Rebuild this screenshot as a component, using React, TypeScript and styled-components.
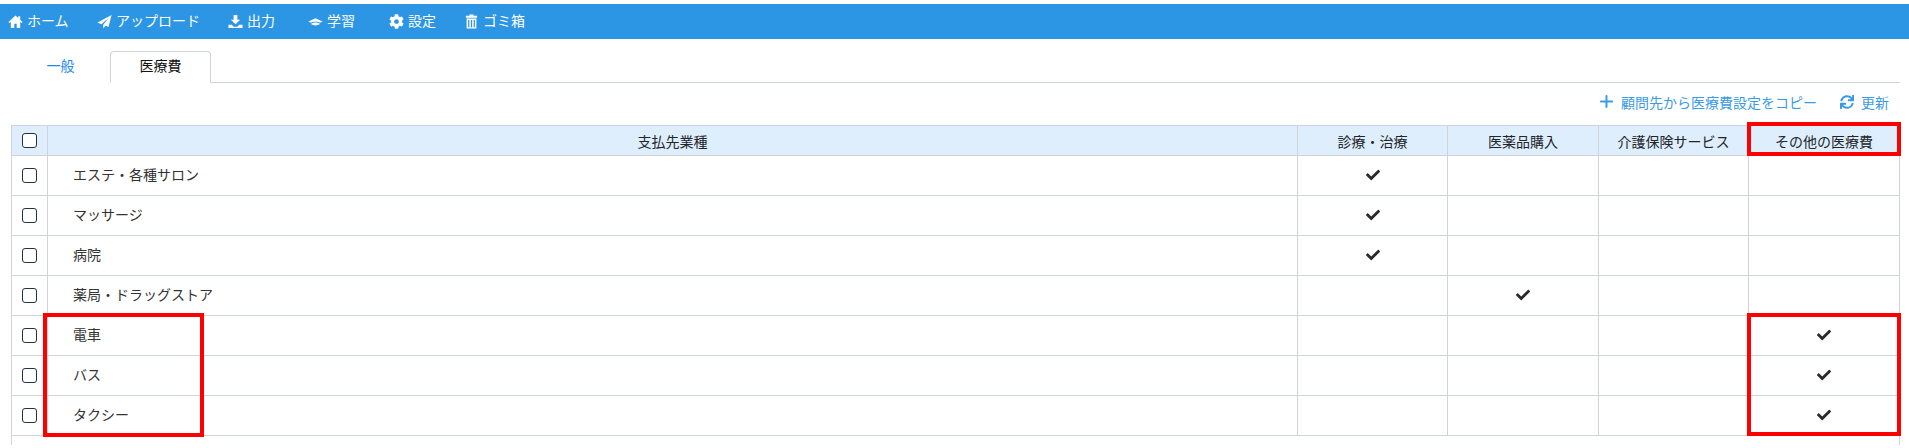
import React from 'react';
import styled, { createGlobalStyle } from 'styled-components';
import { FaCog, FaCheck, FaSync } from 'react-icons/fa';
import { FiPlus } from 'react-icons/fi';

const GlobalStyle = createGlobalStyle`
  html, body {
    margin: 0;
    background: #fff;
    font-family: "Liberation Sans", "Noto Sans CJK JP", sans-serif;
    font-size: 14px;
    color: #212529;
  }
`;

const Page = styled.div`
  padding-top: 4px;
  height: 444px;
  overflow: hidden;
`;

const NavBar = styled.nav`
  display: flex;
  align-items: center;
  height: 35px;
  padding-left: 9px;
  background: #2d96e4;
`;

const NavItem = styled.a<{ $width: number }>`
  display: flex;
  align-items: center;
  gap: 5px;
  width: ${p => p.$width}px;
  color: #fff;
  font-size: 14px;
  white-space: nowrap;
  svg { width: 15px; height: 15px; flex: none; margin-left: -1px; margin-right: -1px; }
`;

const NavLabel = styled.span`
  padding-bottom: 4px;
`;

const Content = styled.div`
  padding: 12px 9px 0 11px;
`;

const Tabs = styled.div`
  display: flex;
  height: 31px;
  border-bottom: 1px solid #ced4da;
`;

const Tab = styled.div<{ $active?: boolean; $width: number }>`
  display: flex;
  align-items: center;
  justify-content: center;
  width: ${p => p.$width}px;
  height: 32px;
  box-sizing: border-box;
  padding-bottom: 4px;
  font-size: 14px;
  color: ${p => (p.$active ? '#111' : '#1e88f0')};
  background: #fff;
  border: 1px solid ${p => (p.$active ? '#ced4da' : 'transparent')};
  border-bottom-color: ${p => (p.$active ? '#fff' : 'transparent')};
  border-radius: 4px 4px 0 0;
`;

const Toolbar = styled.div`
  display: flex;
  justify-content: flex-end;
  align-items: center;
  gap: 23px;
  height: 37px;
  padding: 0 11px 5px 0;
`;

const ToolButton = styled.a<{ $gap: number }>`
  display: flex;
  align-items: center;
  gap: ${p => p.$gap}px;
  color: #3a9be4;
  font-size: 14px;
  svg { flex: none; }
`;

const TableWrap = styled.div`
  position: relative;
  height: 320px;
  border-left: 1px solid #ced4da;
  border-right: 1px solid #ced4da;
`;

const Table = styled.table`
  width: 100%;
  table-layout: fixed;
  border-collapse: collapse;
  font-size: 14px;
`;

const HeadCell = styled.th<{ $width?: number }>`
  width: ${p => (p.$width ? `${p.$width}px` : 'auto')};
  height: 29px;
  padding: 0;
  background: #deeefd;
  border: 1px solid #ced4da;
  font-weight: 400;
  text-align: center;
  color: #212529;
  &:first-child { border-left: 0; }
  &:last-child { border-right: 0; }
`;

const Cell = styled.td`
  height: 37px;
  padding: 0 0 2px;
  border: 1px solid #ced4da;
  text-align: center;
  &:last-child { border-right: 0; }
  svg { display: block; margin: 0 auto; color: #2a2a2a; }
`;

const CheckCell = styled.td`
  height: 39px;
  padding: 0;
  border: 1px solid #ced4da;
  border-left: 0;
`;

const NameCell = styled.td`
  height: 36px;
  padding: 0 0 3px 25px;
  border: 1px solid #ced4da;
  text-align: left;
  color: #333;
`;

const Check = styled.span`
  display: block;
  width: 15px;
  height: 15px;
  margin: 0 auto;
  box-sizing: border-box;
  border: 1px solid #23323f;
  border-radius: 3px;
  background: #fff;
`;

const RedBox = styled.div<{ $left?: number; $right?: number; $top: number; $width: number; $height: number }>`
  position: absolute;
  ${p => (p.$left !== undefined ? `left: ${p.$left}px;` : '')}
  ${p => (p.$right !== undefined ? `right: ${p.$right}px;` : '')}
  top: ${p => p.$top}px;
  width: ${p => p.$width}px;
  height: ${p => p.$height}px;
  box-sizing: border-box;
  border: 4px solid #f00;
`;

const Glyph: React.FC<{ d: string }> = ({ d }) => (
  <svg viewBox="0 0 16 16" fill="currentColor" fillRule="evenodd"><path d={d} /></svg>
);

const homeIcon = 'M8 1.5 L0.5 8.5 l1 1.2 L3 8.4 V15 h3.7 v-4.5 h2.6 V15 H13 V8.4 l1.5 1.3 1-1.2 -2.5-2.3 V2.5 h-2 v1.8z';
const sendIcon = 'M15.5 1 L0.5 9 l4.3 1.8 L12.5 4 6.5 11.6 V15.5 l2.6-3 3.2 1.4z';
const saveIcon = 'M6 1h4v5h3l-5 5 -5-5h3z M0.5 11.5H4l2 2h4l2-2h3.5V15H0.5z';
const eduIcon = 'M8 4.5 L0.5 8 3 9.2 C5.5 7.8 10.5 7.8 13 9.2 L15.5 8z M3.5 10 C6 8.9 10 8.9 12.5 10 V11 C10 12.6 6 12.6 3.5 11z';
const trashIcon = 'M5.8 0.5h4.4v1.4H14v2H2v-2h3.8z M2.8 4.8h10.4V15.5H2.8z M4.4 6.4v7.6h1.3V6.4z M7.3 6.4v7.6h1.4V6.4z M10.3 6.4v7.6h1.3V6.4z';

const navItems = [
  { label: 'ホーム', icon: <Glyph d={homeIcon} />, width: 89 },
  { label: 'アップロード', icon: <Glyph d={sendIcon} />, width: 131 },
  { label: '出力', icon: <Glyph d={saveIcon} />, width: 80 },
  { label: '学習', icon: <Glyph d={eduIcon} />, width: 81 },
  { label: '設定', icon: <FaCog />, width: 75 },
  { label: 'ゴミ箱', icon: <Glyph d={trashIcon} />, width: 80 },
];

const columns = [
  { label: '診療・治療', width: 149 },
  { label: '医薬品購入', width: 150 },
  { label: '介護保険サービス', width: 149 },
  { label: 'その他の医療費', width: 150 },
];

const rows: { name: string; checked: number }[] = [
  { name: 'エステ・各種サロン', checked: 0 },
  { name: 'マッサージ', checked: 0 },
  { name: '病院', checked: 0 },
  { name: '薬局・ドラッグストア', checked: 1 },
  { name: '電車', checked: 3 },
  { name: 'バス', checked: 3 },
  { name: 'タクシー', checked: 3 },
];

const App: React.FC = () => (
  <Page>
    <GlobalStyle />
    <NavBar>
      {navItems.map(item => (
        <NavItem key={item.label} $width={item.width}>
          {item.icon}
          <NavLabel>{item.label}</NavLabel>
        </NavItem>
      ))}
    </NavBar>
    <Content>
      <Tabs>
        <Tab $width={99}>一般</Tab>
        <Tab $active $width={101}>医療費</Tab>
      </Tabs>
      <Toolbar>
        <ToolButton $gap={5}><FiPlus size={19} strokeWidth={2.5} />顧問先から医療費設定をコピー</ToolButton>
        <ToolButton $gap={7}><FaSync size={14} />更新</ToolButton>
      </Toolbar>
      <TableWrap>
        <Table>
          <thead>
            <tr>
              <HeadCell $width={35}><Check /></HeadCell>
              <HeadCell>支払先業種</HeadCell>
              {columns.map(col => <HeadCell key={col.label} $width={col.width}>{col.label}</HeadCell>)}
            </tr>
          </thead>
          <tbody>
            {rows.map(row => (
              <tr key={row.name}>
                <CheckCell><Check /></CheckCell>
                <NameCell>{row.name}</NameCell>
                {columns.map((col, i) => (
                  <Cell key={col.label}>{row.checked === i && <FaCheck size={14} />}</Cell>
                ))}
              </tr>
            ))}
          </tbody>
        </Table>
        <RedBox $right={-2} $top={-3} $width={154} $height={34} />
        <RedBox $left={31} $top={188} $width={161} $height={124} />
        <RedBox $right={-2} $top={188} $width={154} $height={123} />
      </TableWrap>
    </Content>
  </Page>
);

export default App;
